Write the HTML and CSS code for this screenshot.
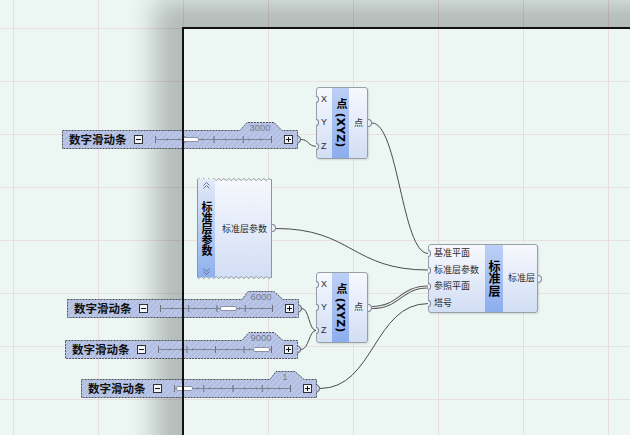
FILE: index.html
```html
<!DOCTYPE html>
<html lang="zh-CN">
<head>
<meta charset="utf-8">
<title>Grasshopper 画布</title>
<link rel="stylesheet" href="styles.css">
</head>
<body>
<div class="canvas">
  <div class="page-shadow"></div>

  <svg class="defs" width="0" height="0" aria-hidden="true">
    <defs>
      <pattern id="hatch" patternUnits="userSpaceOnUse" width="4" height="4" patternTransform="rotate(45)">
        <rect width="4" height="4" fill="#b2bfe2"/>
        <rect width="1" height="4" fill="#c3cdea"/>
      </pattern>
      <linearGradient id="cg" x1="0" y1="0" x2="0" y2="1">
        <stop offset="0" stop-color="#f6f8fd"/>
        <stop offset="1" stop-color="#d2def5"/>
      </linearGradient>
    </defs>
  </svg>

  <svg class="wires" width="630" height="435">
    <path d="M301,139.5 C309,139.5 308,146.3 316,146.3"/>
    <path d="M372,123 C398,123 402,253.4 428,253.4"/>
    <path d="M276,228.5 C352,228.5 352,270 428,270"/>
    <path d="M320,388.5 C374,388.5 374,303.6 428,303.6"/>
    <path d="M302,308.5 C309,308.5 309,330.5 316,330.5"/>
    <path d="M301,349.5 C309,349.5 309,330.5 316,330.5"/>
    <path class="dbl-o" d="M372,307.5 C400,307.5 400,287 428,287"/>
    <path class="dbl-i" d="M372,307.5 C400,307.5 400,287 428,287"/>
  </svg>

  <!-- sliders -->
  <div class="slider s1">
    <svg class="shape" width="236" height="27">
      <path class="outline" d="M0.5,8.5 H178 L185,0.5 H212 L220,8.5 H235.5 V26.5 H0.5 Z"/>
      <path class="grip" d="M235.5,14 C239.5,14 239.5,21 235.5,21"/>
      <text class="val" x="198" y="8.5" text-anchor="middle">3000</text>
    </svg>
    <div class="sbody">
      <span class="slabel">数字滑动条</span>
      <span class="btn"></span>
      <span class="track"><span class="knob" style="left:30%"></span></span>
      <span class="btn plus"></span>
    </div>
  </div>

  <div class="slider s2">
    <svg class="shape" width="232" height="27">
      <path class="outline" d="M0.5,8.5 H175 L181,0.5 H207 L216,8.5 H231.5 V26.5 H0.5 Z"/>
      <path class="grip" d="M231.5,14 C235.5,14 235.5,21 231.5,21"/>
      <text class="val" x="194" y="8.5" text-anchor="middle">6000</text>
    </svg>
    <div class="sbody">
      <span class="slabel">数字滑动条</span>
      <span class="btn"></span>
      <span class="track"><span class="knob" style="left:60%"></span></span>
      <span class="btn plus"></span>
    </div>
  </div>

  <div class="slider s3">
    <svg class="shape" width="233" height="27">
      <path class="outline" d="M0.5,8.5 H177 L184,0.5 H209 L218,8.5 H232.5 V26.5 H0.5 Z"/>
      <path class="grip" d="M232.5,14 C236.5,14 236.5,21 232.5,21"/>
      <text class="val" x="196" y="8.5" text-anchor="middle">9000</text>
    </svg>
    <div class="sbody">
      <span class="slabel">数字滑动条</span>
      <span class="btn"></span>
      <span class="track"><span class="knob" style="left:90%"></span></span>
      <span class="btn plus"></span>
    </div>
  </div>

  <div class="slider s4">
    <svg class="shape" width="236" height="27">
      <path class="outline" d="M0.5,8.5 H189 L195,0.5 H214 L223,8.5 H235.5 V26.5 H0.5 Z"/>
      <path class="grip" d="M235.5,14 C239.5,14 239.5,21 235.5,21"/>
      <text class="val" x="204" y="8.5" text-anchor="middle">1</text>
    </svg>
    <div class="sbody">
      <span class="slabel">数字滑动条</span>
      <span class="btn"></span>
      <span class="track"><span class="knob" style="left:10px"></span></span>
      <span class="btn plus"></span>
    </div>
  </div>

  <!-- point components -->
  <div class="comp pt pt1">
    <div class="ins">
      <div class="port"><i class="gi"></i>X</div>
      <div class="port"><i class="gi"></i>Y</div>
      <div class="port"><i class="gi"></i>Z</div>
    </div>
    <div class="strip"><span class="vname">点 (XYZ)</span></div>
    <div class="outs"><div class="port"><span>点</span><i class="go"></i></div></div>
  </div>

  <div class="comp pt pt2">
    <div class="ins">
      <div class="port"><i class="gi"></i>X</div>
      <div class="port"><i class="gi"></i>Y</div>
      <div class="port"><i class="gi"></i>Z</div>
    </div>
    <div class="strip"><span class="vname">点 (XYZ)</span></div>
    <div class="outs"><div class="port"><span>点</span><i class="go"></i></div></div>
  </div>

  <!-- parameter component -->
  <div class="prm">
    <svg class="prm-shape" width="75" height="103">
      <path d="M0.5,2.5 q1.25,-2 2.5,0 t2.5,0 t2.5,0 t2.5,0 t2.5,0 t2.5,0 t2.5,0 t2.5,0 t2.5,0 t2.5,0 t2.5,0 t2.5,0 t2.5,0 t2.5,0 t2.5,0 t2.5,0 t2.5,0 t2.5,0 t2.5,0 t2.5,0 t2.5,0 t2.5,0 t2.5,0 t2.5,0 t2.5,0 t2.5,0 t2.5,0 t2.5,0 t2.5,0 L74.5,2.5 L74.5,100.5 L73,100.5 q-1.25,2 -2.5,0 t-2.5,0 t-2.5,0 t-2.5,0 t-2.5,0 t-2.5,0 t-2.5,0 t-2.5,0 t-2.5,0 t-2.5,0 t-2.5,0 t-2.5,0 t-2.5,0 t-2.5,0 t-2.5,0 t-2.5,0 t-2.5,0 t-2.5,0 t-2.5,0 t-2.5,0 t-2.5,0 t-2.5,0 t-2.5,0 t-2.5,0 t-2.5,0 t-2.5,0 t-2.5,0 t-2.5,0 t-2.5,0 Z"/>
    </svg>
    <div class="prm-strip">
      <svg class="chev" width="7" height="7" viewBox="0 0 7 7"><path d="M0.5,3.5 L3.5,0.5 L6.5,3.5 M0.5,6.5 L3.5,3.5 L6.5,6.5"/></svg>
      <span class="vname">标准层参数</span>
      <svg class="chev" width="7" height="7" viewBox="0 0 7 7"><path d="M0.5,0.5 L3.5,3.5 L6.5,0.5 M0.5,3.5 L3.5,6.5 L6.5,3.5"/></svg>
    </div>
    <div class="prm-out"><span>标准层参数</span><i class="go"></i></div>
  </div>

  <!-- standard layer component -->
  <div class="comp std">
    <div class="ins">
      <div class="port"><i class="gi"></i>基准平面</div>
      <div class="port"><i class="gi"></i>标准层参数</div>
      <div class="port"><i class="gi"></i>参照平面</div>
      <div class="port"><i class="gi"></i>塔号</div>
    </div>
    <div class="strip"><span class="vname">标准层</span></div>
    <div class="outs"><div class="port"><span>标准层</span><i class="go"></i></div></div>
  </div>

  <div class="page-edge"></div>
</div>
</body>
</html>
```

FILE: styles.css
```css
* { box-sizing: border-box; margin: 0; padding: 0; }
html, body { width: 630px; height: 435px; overflow: hidden; }
body { font-family: "Noto Sans CJK SC", sans-serif; background: #ecf7f3; }

.canvas {
  position: relative;
  width: 630px;
  height: 435px;
  overflow: hidden;
  background-color: #ecf7f3;
  background-image:
    linear-gradient(to right, #e9dbdf 1px, transparent 1px),
    linear-gradient(to bottom, #e7e0e1 1px, transparent 1px);
  background-size: 85px 100%, 100% 53px;
  background-position: 13px 0, 0 28px;
}

.page-shadow {
  position: absolute;
  left: 182px;
  top: 27px;
  width: 600px;
  height: 600px;
  box-shadow: -28px -28px 25px rgba(0, 0, 0, 0.24);
}
.page-edge {
  position: absolute;
  left: 182px;
  top: 27px;
  width: 600px;
  height: 600px;
  border-top: 2px solid #111;
  border-left: 2px solid #111;
  pointer-events: none;
}

.defs { position: absolute; width: 0; height: 0; }

.wires { position: absolute; left: 0; top: 0; }
.wires path { fill: none; stroke: #4a4a4a; stroke-width: 1; }
.wires .dbl-o { stroke: #5c5c5c; stroke-width: 3.2; }
.wires .dbl-i { stroke: #eef3f1; stroke-width: 1.2; }

/* ---------- sliders ---------- */
.slider {
  position: absolute;
  height: 27px;
  padding-top: 8px;
  display: flex;
  flex-direction: column;
}
.s1 { left: 62px; top: 122px; width: 236px; }
.s2 { left: 67px; top: 291px; width: 232px; }
.s3 { left: 65px; top: 332px; width: 233px; }
.s4 { left: 81px; top: 371px; width: 236px; }

.shape { position: absolute; left: 0; top: 0; overflow: visible; }
.shape .outline { fill: url(#hatch); stroke: #4d505a; stroke-width: 1; stroke-dasharray: 2 1; }
.shape .grip { fill: #c9d1ea; stroke: #4d505a; stroke-width: 1; }
.shape .val { font-family: "Liberation Sans", sans-serif; font-size: 9.5px; fill: #757c8e; }

.sbody {
  position: relative;
  height: 19px;
  display: flex;
  align-items: center;
  padding: 0 5px 0 7px;
}
.slabel {
  width: 57px;
  font-size: 11.5px;
  font-weight: 700;
  line-height: 1;
  color: #111;
  white-space: nowrap;
}
.btn {
  position: relative;
  width: 9px;
  height: 9px;
  margin-left: 8px;
  border: 1px solid #2e3038;
  background: #f4f5f8;
}
.btn::before {
  content: "";
  position: absolute;
  left: 1px;
  right: 1px;
  top: 3px;
  height: 1px;
  background: #111;
}
.btn.plus { margin-left: 0; }
.btn.plus::after {
  content: "";
  position: absolute;
  top: 1px;
  bottom: 1px;
  left: 3px;
  width: 1px;
  background: #111;
}
.track {
  position: relative;
  flex: 1;
  height: 9px;
  margin: 0 12px;
  background:
    linear-gradient(#7e8596, #7e8596) 0 4px / 100% 1px no-repeat,
    linear-gradient(to right, #676e7e 1px, transparent 1px) 0 1px / 25% 7px repeat-x,
    linear-gradient(to right, #8a91a1 1px, transparent 1px) 0 3px / 10% 3px repeat-x;
}
.track::after {
  content: "";
  position: absolute;
  right: 0;
  top: 1px;
  width: 1px;
  height: 7px;
  background: #676e7e;
}
.knob {
  position: absolute;
  top: 2px;
  width: 17px;
  height: 5px;
  margin-left: -8px;
  background: #fff;
  border: 1px solid #8d92a0;
  border-radius: 2px;
}

/* ---------- components ---------- */
.comp {
  position: absolute;
  display: flex;
  border: 1px solid #9a9ea7;
  border-radius: 3px;
  background: linear-gradient(#f6f8fd, #d2def5);
  box-shadow: 1px 1px 2px rgba(0, 0, 0, 0.12);
  font-family: "Liberation Sans", "Noto Sans CJK SC", sans-serif;
  font-size: 9px;
  color: #2a2a2a;
}
.pt1 { left: 316px; top: 87px; width: 52px; height: 72px; }
.pt2 { left: 316px; top: 272px; width: 52px; height: 71px; }
.std { left: 428px; top: 244px; width: 110px; height: 69px; }

.ins { display: flex; flex-direction: column; }
.pt .ins { width: 15px; }
.pt .ins .port { padding-left: 4px; }
.std .ins { width: 56px; }
.std .ins .port { padding-left: 5px; }
.outs { flex: 1; display: flex; flex-direction: column; }
.outs .port { justify-content: flex-end; padding-right: 4px; }
.std .outs .port { padding-right: 2px; }

.port {
  position: relative;
  flex: 1;
  display: flex;
  align-items: center;
  white-space: nowrap;
  line-height: 1;
}
.gi {
  position: absolute;
  left: -1px;
  top: 50%;
  width: 3px;
  height: 7px;
  margin-top: -3.5px;
  border: 1px solid #7f8591;
  border-left: 0;
  border-radius: 0 4px 4px 0;
  background: #eef1f8;
}
.go {
  position: absolute;
  right: -5px;
  top: 50%;
  width: 4px;
  height: 8px;
  margin-top: -4px;
  border: 1px solid #7f8591;
  border-left: 0;
  border-radius: 0 4px 4px 0;
  background: #eef1f8;
}

.strip {
  display: flex;
  align-items: center;
  justify-content: center;
  background: linear-gradient(#bcd0f6, #8caeee);
}
.pt .strip { width: 17px; }
.std .strip { width: 18px; }

.vname {
  writing-mode: vertical-rl;
  font-weight: 700;
  color: #000;
  line-height: 1;
  white-space: nowrap;
}
.pt .vname { font-family: "DejaVu Sans", "Noto Sans CJK SC", sans-serif; font-size: 11px; }
.std .vname { font-family: "Noto Sans CJK SC", sans-serif; font-size: 12px; letter-spacing: 0.5px; }

/* ---------- parameter ---------- */
.prm {
  position: absolute;
  left: 197px;
  top: 177px;
  width: 75px;
  height: 103px;
  display: flex;
  padding: 2px 0 3px 1px;
  font-family: "Noto Sans CJK SC", sans-serif;
  font-size: 9px;
  color: #2a2a2a;
}
.prm-shape { position: absolute; left: 0; top: 0; overflow: visible; }
.prm-shape path { fill: url(#cg); stroke: #8f949d; stroke-width: 1; }
.prm-strip {
  position: relative;
  width: 17px;
  display: flex;
  flex-direction: column;
  align-items: center;
  justify-content: space-between;
  padding: 3px 0 2px;
  background: linear-gradient(#e3eaf9, #b9cdf3 50%, #8db0ee);
}
.prm-strip .vname { font-size: 11px; }
.chev path { fill: none; stroke: #6d7384; stroke-width: 1; }
.prm-out {
  position: relative;
  flex: 1;
  display: flex;
  align-items: center;
  padding-left: 7px;
  line-height: 1;
  white-space: nowrap;
}
.prm-out .go { right: -4px; }
```
